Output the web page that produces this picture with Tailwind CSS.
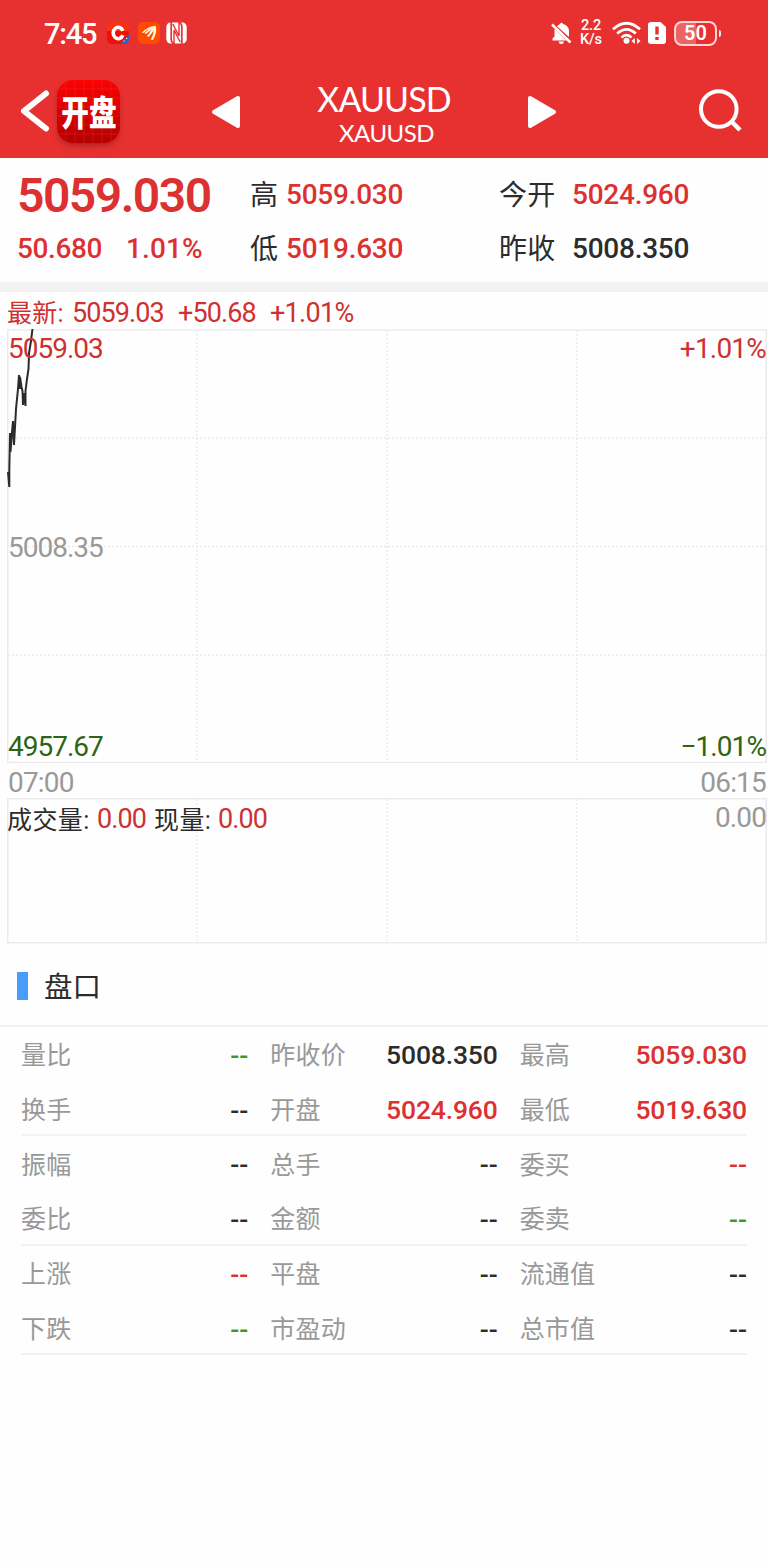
<!DOCTYPE html>
<html lang="zh-CN">
<head>
<meta charset="utf-8">
<title>XAUUSD</title>
<script src="https://cdn.jsdelivr.net/npm/@tailwindcss/browser@4"></script>
</head>
<body class="w-[768px] h-[1568px] overflow-hidden bg-[#fefefe] text-[#2c2c2c] font-['Roboto','Noto_Sans_CJK_SC',sans-serif] leading-none whitespace-nowrap">
<header class="h-[158px] bg-[#e73131] text-white">
  <!-- status bar -->
  <div class="h-[66px] flex items-center pl-[44px] pr-[47px]">
    <span class="w-[63px] pt-[2px] text-[29px] font-medium tracking-[-1.2px]">7:45</span>
    <svg class="w-[22px] h-[22px]" viewBox="0 0 22 22"><rect width="22" height="22" rx="5" fill="#ef1007"/><path d="M0 5Q0 0 5 0H17Q22 0 22 5V9H0z" fill="#fb4a1c" opacity=".6"/><path d="M22 12V17Q22 22 17 22H13z" fill="#2a62c8"/><path d="M15.800 8.800A5 5.700 0 1 0 15.800 13.200" fill="none" stroke="#fff" stroke-width="3.600"/><path d="M16.500 19h1.200M19 16.500h1.200" stroke="#fff" stroke-width="1"/></svg>
    <svg class="w-[22px] h-[22px] ml-[9px]" viewBox="0 0 22 22"><rect width="22" height="22" rx="5" fill="#ff4a00"/><path d="M4 10.500Q9 5 17.500 3.800Q19.800 10 15 18L12.600 17.600Q15.800 12 15.500 8.500Q13.500 12 10.700 15L8.800 14Q12.200 10.500 13.500 7.300Q10.500 10.400 7.700 12.100L6.400 11Q9.500 9 11.500 6.800Q8 8.500 5.500 11z" fill="#fff7d8"/></svg>
    <svg class="w-[21px] h-[22px] ml-[6px]" viewBox="0 0 21 22"><rect x=".3" y=".5" width="20.400" height="21" rx="4.500" fill="#fff"/><path d="M5.200 0V18Q5.200 20 8 22M15.800 22V4Q15.800 2 13 0" fill="none" stroke="#e73131" stroke-width="1.700"/><path d="M8 22V8L14.200 20M13 0V14L6.800 2" fill="none" stroke="#e73131" stroke-width="1.400"/></svg>
    <div class="ml-auto flex items-center">
      <svg class="w-[21px] h-[23px]" viewBox="0 0 21 23"><path d="M7 3.500Q8.500 2.300 9 2Q10.500 -.4 12 2Q18 3.500 18 9.500V15L6 4.300zM3.500 7L15.500 18.500H1.500V16.500L3.500 14.500zM7.500 19.500H13Q12.500 22 10.300 22T7.500 19.500z" fill="#fff"/><path d="M1 2.500L19.500 20.500" stroke="#fff" stroke-width="2.500"/></svg>
      <div class="ml-[7px] w-[24px] text-center text-[14.500px] leading-[14px] font-medium tracking-[-0.1px]"><div>2.2</div><div>K/s</div></div>
      <svg class="w-[29px] h-[24px] ml-[9px]" viewBox="0 0 29 24"><g fill="none" stroke="#fff" stroke-width="2.700"><path d="M1 8.300Q14.500 -3.800 28 8.300M5.200 12.600Q14.500 4.200 23.800 12.600M9.400 16.400Q14.500 12 19.600 16.400"/></g><circle cx="14.500" cy="19.700" r="3" fill="#fff"/><path d="M19.500 20L22.800 17V23zM28.500 20L25 17V23z" fill="#fff"/></svg>
      <svg class="w-[18px] h-[22px] ml-[7px]" viewBox="0 0 18 22"><path d="M3 0H12.500L18 5V19Q18 22 15 22H3Q0 22 0 19V3Q0 0 3 0z" fill="#fff"/><path d="M9 4.500V12.500M9 15V18" stroke="#e73131" stroke-width="3.400"/></svg>
      <div class="ml-[8px] w-[43px] h-[25px] rounded-[8px] border-2 border-[#ffd5d5] bg-linear-to-r from-white/25 from-50% to-transparent to-50% flex items-center justify-center text-[20px] font-semibold">50</div>
      <div class="ml-[2px] w-[2px] h-[7px] bg-white/90 rounded-r"></div>
    </div>
  </div>
  <!-- navigation -->
  <div class="h-[92px] flex items-start pl-[20px] pr-[26px]">
    <svg class="w-[30px] h-[42px] mt-[24px]" viewBox="0 0 30 42"><path d="M26 3.500L4 21L26 38.500" fill="none" stroke="#fff" stroke-width="6" stroke-linecap="round" stroke-linejoin="round"/></svg>
    <div class="mt-[14px] ml-[7px] size-[63px] rounded-[16px] shadow-md shadow-red-900/40 bg-linear-to-b from-[#fb0303] to-[#b50000] overflow-hidden grid">
      <svg class="col-start-1 row-start-1" viewBox="0 0 63 63"><path d="M9 0V63M18 0V63M27 0V63M36 0V63M45 0V63M54 0V63M0 9H63M0 18H63M0 27H63M0 36H63M0 45H63M0 54H63" stroke="#ff6060" stroke-opacity=".2"/></svg>
      <span class="col-start-1 row-start-1 self-center justify-self-center w-[70px] text-center -mx-[4px] mt-[-3px] text-[35px] font-black scale-x-[0.79] font-['Noto_Sans_CJK_SC']">开盘</span>
    </div>
    <svg class="w-[30px] h-[34px] mt-[29px] ml-[91px]" viewBox="0 0 30 34"><path d="M3 17L27 3V31z" fill="#fff" stroke="#fff" stroke-width="4" stroke-linejoin="round"/></svg>
    <div class="w-[286px] flex flex-col items-center pt-[16px] font-['Lato']">
      <span class="text-[34px] leading-[34px] tracking-[-0.9px]">XAUUSD</span>
      <span class="text-[24px] leading-[24px] mt-[5px] ml-[5px] tracking-[-0.5px]">XAUUSD</span>
    </div>
    <svg class="w-[30px] h-[34px] mt-[29px]" viewBox="0 0 30 34"><path d="M27 17L3 3V31z" fill="#fff" stroke="#fff" stroke-width="4" stroke-linejoin="round"/></svg>
    <svg class="w-[44px] h-[44px] ml-auto mt-[23px]" viewBox="0 0 44 44"><circle cx="20.800" cy="20" r="17.800" fill="none" stroke="#fff" stroke-width="4"/><path d="M33 32L42 41" stroke="#fff" stroke-width="4.500"/></svg>
  </div>
</header>

<!-- quote summary -->
<section class="h-[134px] border-b-[10px] border-[#f2f2f2] pl-[17px] pt-[10px] flex text-[28px] font-medium tracking-[-0.25px]">
  <div class="w-[233px] text-[#dc3131]">
    <div class="h-[54px] flex items-center pt-[2px] text-[48px] font-semibold tracking-[-1.5px]">5059.030</div>
    <div class="h-[54px] flex items-center"><span class="w-[109px] tracking-[-0.4px]">50.680</span><span class="tracking-[0.1px]">1.01%</span></div>
  </div>
  <div class="w-[249px]">
    <div class="h-[54px] flex items-center"><span class="w-[36px] font-normal pt-px">高</span><span class="text-[#dc3131]">5059.030</span></div>
    <div class="h-[54px] flex items-center"><span class="w-[36px] font-normal pt-[2px]">低</span><span class="text-[#dc3131]">5019.630</span></div>
  </div>
  <div>
    <div class="h-[54px] flex items-center"><span class="w-[73px] font-normal pt-px tracking-[0.3px]">今开</span><span class="text-[#dc3131]">5024.960</span></div>
    <div class="h-[54px] flex items-center"><span class="w-[73px] font-normal tracking-[0.3px] pt-[2px]">昨收</span><span>5008.350</span></div>
  </div>
</section>

<!-- intraday chart -->
<section class="pl-[7px]">
  <div class="h-[37px] flex items-center pt-[5px] text-[27px] tracking-[-0.9px] text-[#cf3131]"><span class="text-[25px] tracking-[0.3px] w-[65px]">最新:</span><span class="w-[106px]">5059.03</span><span class="w-[92px]">+50.68</span><span class="tracking-[-0.7px]">+1.01%</span></div>
  <div class="relative h-[434px] text-[28px] tracking-[-1px]">
    <svg class="absolute inset-0 w-[761px] h-[434px]" viewBox="0 0 761 434"><rect x=".75" y="1" width="758.500" height="432.500" fill="none" stroke="#ebebeb" stroke-width="1.500"/><path d="M190 1V433M380 1V433M570 1V433M1 109H760M1 217.500H760M1 326H760" stroke="#eaeaea" stroke-width="1.500" stroke-dasharray="2 2" fill="none"/><path d="M1 143L2.300 158V140L3 104L3.500 123L5 103L6 92L7 116L9 80L11 60L12 46L13 60V48L14.500 58L15.500 62L16 76L17 64L18.500 77V62L20 50L21.500 40L22 24L24 12L25.500 0" stroke="#2b2b2b" stroke-width="2" fill="none"/></svg>
    <div class="absolute inset-0 pl-[1px] pr-[2px] flex flex-col justify-between pt-[6px] pb-[2px]">
      <div class="flex justify-between text-[#cf3131]"><span>5059.03</span><span class="tracking-[-0.8px]">+1.01%</span></div>
      <div class="text-[#999]">5008.35</div>
      <div class="flex justify-between text-[#2f6412]"><span>4957.67</span><span class="tracking-[-0.9px]">−1.01%</span></div>
    </div>
  </div>
  <div class="h-[35px] flex items-center justify-between pl-[1px] pr-[2px] pt-[4px] text-[28px] tracking-[-0.8px] text-[#999]"><span>07:00</span><span>06:15</span></div>
  <div class="relative h-[146px]">
    <svg class="absolute inset-0 w-[761px] h-[146px]" viewBox="0 0 761 146"><rect x=".75" y=".75" width="758.500" height="144" fill="none" stroke="#ebebeb" stroke-width="1.500"/><path d="M190 1V144M380 1V144M570 1V144" stroke="#eaeaea" stroke-width="1.500" stroke-dasharray="2 2"/></svg>
    <div class="relative flex items-center h-[42px] pr-[2px] text-[27px] tracking-[-0.9px] text-[#cf3131]"><span class="w-[90px] text-[25px] tracking-[0.4px] pt-[2px] text-[#2c2c2c]">成交量:</span><span class="w-[57px] pt-px">0.00</span><span class="w-[64px] text-[25px] tracking-[0.4px] pt-[2px] text-[#2c2c2c]">现量:</span><span class="pt-px">0.00</span><span class="ml-auto pb-[2px] text-[28px] text-[#999]">0.00</span></div>
  </div>
</section>

<!-- order book figures -->
<section>
  <h2 class="h-[83px] border-b-2 border-[#f2f2f2] flex items-center pl-[17px] pt-[3px] gap-[16px] text-[28.500px]"><span class="w-[11px] h-[28px] bg-[#489dfb]"></span><span class="pt-[4px]">盘口</span></h2>
  <div id="grid" class="px-[21px]"></div>
</section>

<script>
const R = 'text-[#dc3131]', G = 'text-[#37992a]', K = 'text-[#2c2c2c]';
const groups = [
  [[['量比','--',G],['昨收价','5008.350',K],['最高','5059.030',R]], [['换手','--',K],['开盘','5024.960',R],['最低','5019.630',R]]],
  [[['振幅','--',K],['总手','--',K],['委买','--',R]], [['委比','--',K],['金额','--',K],['委卖','--',G]]],
  [[['上涨','--',R],['平盘','--',K],['流通值','--',K]], [['下跌','--',G],['市盈动','--',K],['总市值','--',K]]]
];
document.getElementById('grid').innerHTML = groups.map(g =>
  '<div class="h-[109.4px] border-b-2 border-[#f2f2f2]">' + g.map(r =>
    '<div class="h-[54.700px] grid grid-cols-3 gap-[22px] items-center pt-px">' + r.map(([l, v, c]) =>
      `<div class="flex items-center justify-between"><span class="pt-[2px] text-[25px] tracking-[0.2px] text-[#999]">${l}</span>` +
      (v === '--' ? `<span class="pt-[3px] text-[26.500px] font-medium ${c}">--</span>` : `<span class="pt-px text-[26.500px] font-medium tracking-[-0.15px] ${c}">${v}</span>`) + '</div>'
    ).join('') + '</div>').join('') + '</div>').join('');
</script>
</body>
</html>
